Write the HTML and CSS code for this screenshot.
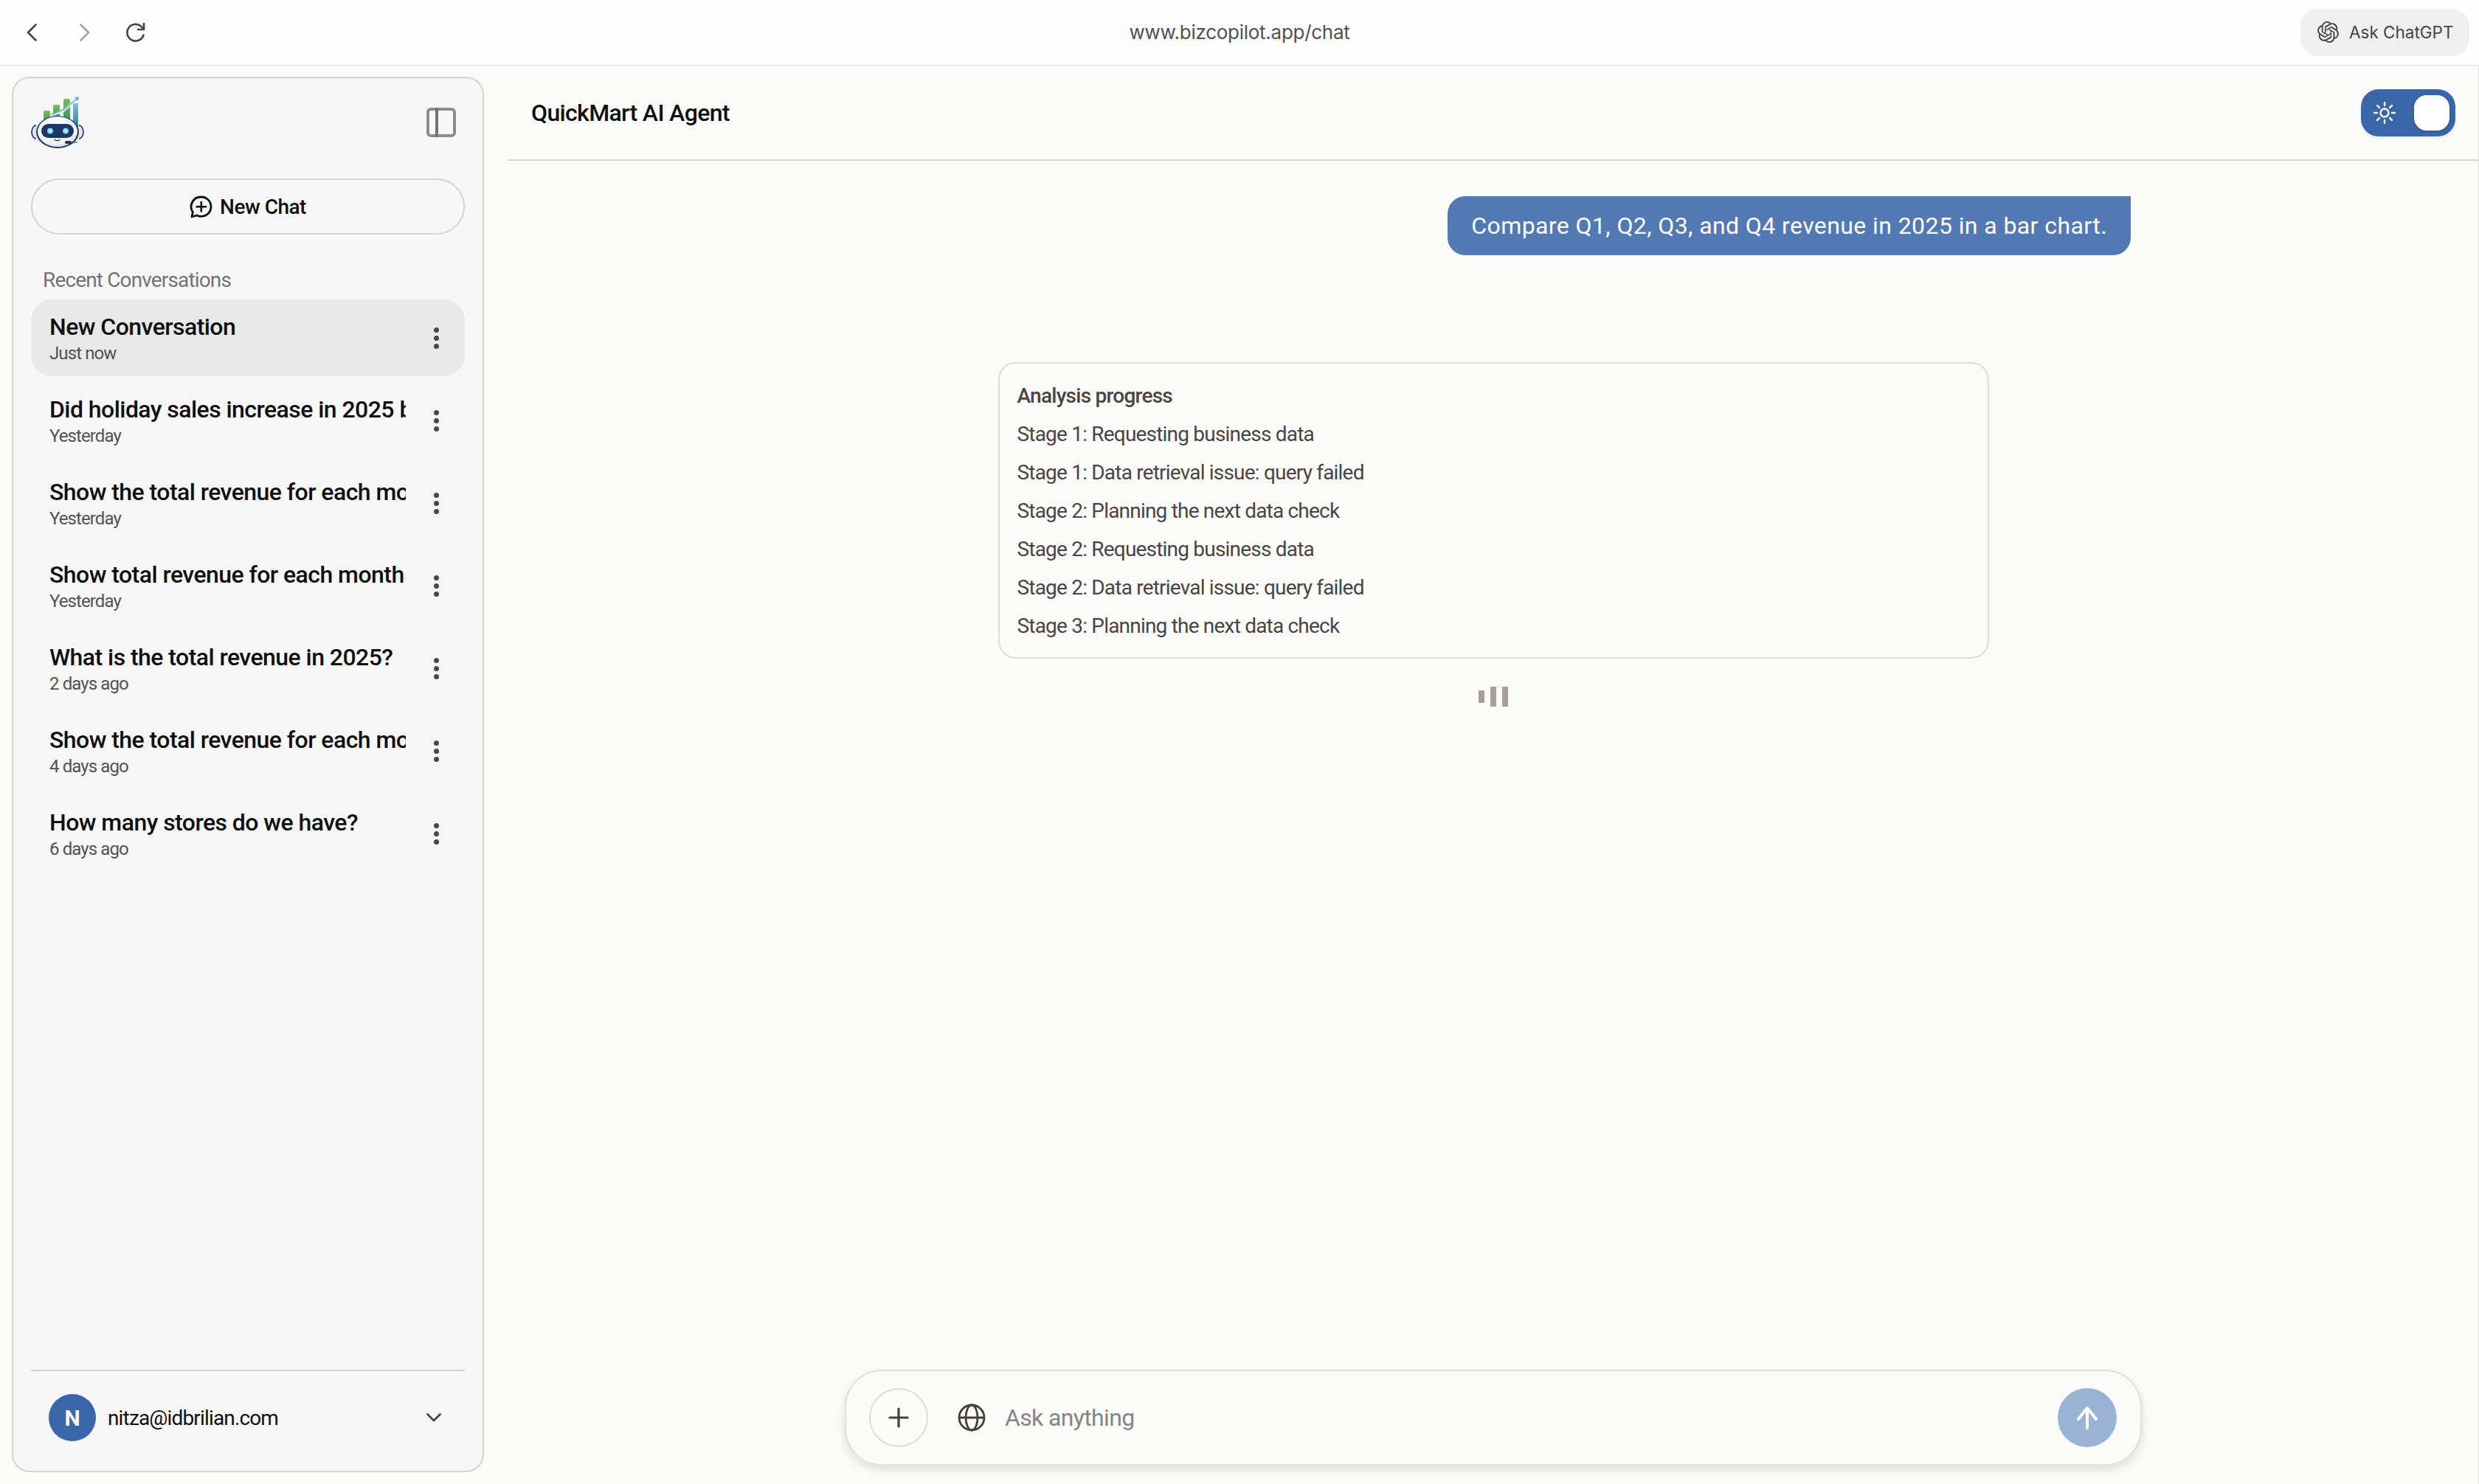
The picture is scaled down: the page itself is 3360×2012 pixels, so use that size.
FILE: index.html
```html
<!DOCTYPE html>
<html lang="en">
<head>
<meta charset="utf-8">
<title>QuickMart AI Agent</title>
<link rel="stylesheet" href="styles.css">
</head>
<body>
<header class="topbar">
  <nav class="nav-icons">
    <svg class="nav-arrow" width="14" height="24" viewBox="0 0 14 24"><path d="M12.5 1.500 2 12l10.500 10.500" fill="none" stroke="#444" stroke-width="2.600" stroke-linecap="round" stroke-linejoin="round"/></svg>
    <svg class="nav-arrow" width="14" height="24" viewBox="0 0 14 24"><path d="M1.500 1.500 12 12 1.500 22.500" fill="none" stroke="#a3a3a3" stroke-width="2.600" stroke-linecap="round" stroke-linejoin="round"/></svg>
    <svg class="reload" width="26" height="26" viewBox="0 0 26 26"><path d="M23.500 16.500A11.300 11.300 0 1 1 20 4.600L24 8.400" fill="none" stroke="#444" stroke-width="2.600" stroke-linecap="round"/><path d="M24 1v8h-8" fill="none" stroke="#444" stroke-width="2.600" stroke-linejoin="round" stroke-linecap="round"/></svg>
  </nav>
  <div class="url">www.bizcopilot.app/chat</div>
  <button class="ask-gpt">
    <svg width="29" height="29" viewBox="0 0 24 24"><path fill="#444" d="M22.2819 9.8211a5.9847 5.9847 0 0 0-.5157-4.9108 6.0462 6.0462 0 0 0-6.5098-2.9A6.0651 6.0651 0 0 0 4.9807 4.1818a5.9847 5.9847 0 0 0-3.9977 2.9 6.0462 6.0462 0 0 0 .7427 7.0966 5.98 5.98 0 0 0 .511 4.9107 6.051 6.051 0 0 0 6.5146 2.9001A5.9847 5.9847 0 0 0 13.2599 24a6.0557 6.0557 0 0 0 5.7718-4.2058 5.9894 5.9894 0 0 0 3.9977-2.9001 6.0557 6.0557 0 0 0-.7475-7.0729zm-9.022 12.6081a4.4755 4.4755 0 0 1-2.8764-1.0408l.1419-.0804 4.7783-2.7582a.7948.7948 0 0 0 .3927-.6813v-6.7369l2.02 1.1686a.071.071 0 0 1 .038.052v5.5826a4.504 4.504 0 0 1-4.4945 4.4944zm-9.6607-4.1254a4.4708 4.4708 0 0 1-.5346-3.0137l.142.0852 4.783 2.7582a.7712.7712 0 0 0 .7806 0l5.8428-3.3685v2.3324a.0804.0804 0 0 1-.0332.0615L9.74 19.9502a4.4992 4.4992 0 0 1-6.1408-1.6464zM2.3408 7.8956a4.485 4.485 0 0 1 2.3655-1.9728V11.6a.7664.7664 0 0 0 .3879.6765l5.8144 3.3543-2.0201 1.1685a.0757.0757 0 0 1-.071 0l-4.8303-2.7865A4.504 4.504 0 0 1 2.3408 7.872zm16.5963 3.8558L13.1038 8.364 15.1192 7.2a.0757.0757 0 0 1 .071 0l4.8303 2.7913a4.4944 4.4944 0 0 1-.6765 8.1042v-5.6772a.79.79 0 0 0-.407-.667zm2.0107-3.0231l-.142-.0852-4.7735-2.7818a.7759.7759 0 0 0-.7854 0L9.409 9.2297V6.8974a.0662.0662 0 0 1 .0284-.0615l4.8303-2.7866a4.4992 4.4992 0 0 1 6.6802 4.66zM8.3065 12.863l-2.02-1.1638a.0804.0804 0 0 1-.038-.0567V6.0742a4.4992 4.4992 0 0 1 7.3757-3.4537l-.142.0805L8.704 5.459a.7948.7948 0 0 0-.3927.6813zm1.0976-2.3654l2.602-1.4998 2.6069 1.4998v2.9994l-2.5974 1.4997-2.6067-1.4997Z"/></svg>
    <span>Ask ChatGPT</span>
  </button>
</header>
<div class="app">
  <aside class="sidebar">
    <div class="side-head">
      <svg width="72" height="70" viewBox="0 0 72 70">
        <defs>
          <linearGradient id="gb" x1="0" y1="0" x2="0" y2="1"><stop offset="0" stop-color="#7dbb5e"/><stop offset="1" stop-color="#2f8a5a"/></linearGradient>
          <linearGradient id="tb" x1="0" y1="0" x2="0" y2="1"><stop offset="0" stop-color="#7cc4d6"/><stop offset="1" stop-color="#2f7f9e"/></linearGradient>
          <radialGradient id="hd" cx=".45" cy=".35" r=".75"><stop offset="0" stop-color="#fff"/><stop offset=".7" stop-color="#f1f2f4"/><stop offset="1" stop-color="#c5ccd6"/></radialGradient>
        </defs>
        <rect x="17" y="19" width="9" height="20" rx="2" fill="url(#gb)"/>
        <rect x="30" y="11" width="9" height="28" rx="2" fill="url(#gb)"/>
        <rect x="44" y="3" width="9" height="36" rx="2" fill="url(#gb)"/>
        <rect x="57" y="9" width="7" height="32" fill="url(#tb)"/>
        <path d="M26 26 44 19 64 1" fill="none" stroke="#f7f7f7" stroke-width="3.400"/>
        <path d="M27 25 45 17 62 3" fill="none" stroke="#58afcf" stroke-width="1.600"/>
        <path d="M59 1.500 65 0 63.500 6Z" fill="#58afcf"/>
        <path d="M7 39a6 9 0 0 0 0 18M65 39a6 9 0 0 1 0 18" fill="#dfe6ee" stroke="#2b4a78" stroke-width="1.800"/>
        <ellipse cx="36" cy="48" rx="29" ry="22" fill="#1f3a62"/>
        <ellipse cx="36" cy="47.500" rx="27" ry="20.500" fill="url(#hd)"/>
        <rect x="14" y="37" width="44" height="19" rx="9.500" fill="#1c3763"/>
        <circle cx="26" cy="46.500" r="4" fill="#6fd5f2"/>
        <circle cx="47" cy="46.500" r="4" fill="#6fd5f2"/>
        <circle cx="26" cy="46.500" r="1.800" fill="#e8fbff"/>
        <circle cx="47" cy="46.500" r="1.800" fill="#e8fbff"/>
        <path d="M32 58.500a4.500 3.500 0 0 0 7 0" fill="none" stroke="#2a3f5f" stroke-width="1.400" stroke-linecap="round"/>
        <rect x="46" y="60" width="9" height="4" rx="2" fill="#24344d"/>
        <path d="M54 62h9" stroke="#2b4a78" stroke-width="1.200"/>
      </svg>
      <svg width="40" height="40" viewBox="0 0 40 40"><rect x="2" y="2" width="36" height="36" rx="4" fill="none" stroke="#8c8c8c" stroke-width="4"/><path d="M14 0v40" stroke="#737373" stroke-width="4"/></svg>
    </div>
    <button class="new-chat">
      <svg width="31" height="31" viewBox="0 0 31 31"><path d="M15.800 2a13.200 13.200 0 0 1 0 26.400c-2.300 0-4.300-.5-6-1.400L3 29l1.300-6.500A13.200 13.200 0 0 1 15.800 2Z" fill="none" stroke="#0f0f0f" stroke-width="2.800" stroke-linejoin="round"/><path d="M15.800 9v12.500M9.500 15.200h12.600" stroke="#0f0f0f" stroke-width="2.600" stroke-linecap="round"/></svg>
      <span>New Chat</span>
    </button>
    <div class="recent-label">Recent Conversations</div>
    <ul class="conv-list">
      <li class="conv active"><div class="conv-text"><div class="conv-title">New Conversation</div><div class="conv-time">Just now</div></div><span class="dots"><i></i><i></i><i></i></span></li>
      <li class="conv"><div class="conv-text"><div class="conv-title">Did holiday sales increase in 2025 by store?</div><div class="conv-time">Yesterday</div></div><span class="dots"><i></i><i></i><i></i></span></li>
      <li class="conv"><div class="conv-text"><div class="conv-title">Show the total revenue for each month in 2025</div><div class="conv-time">Yesterday</div></div><span class="dots"><i></i><i></i><i></i></span></li>
      <li class="conv"><div class="conv-text"><div class="conv-title">Show total revenue for each month</div><div class="conv-time">Yesterday</div></div><span class="dots"><i></i><i></i><i></i></span></li>
      <li class="conv"><div class="conv-text"><div class="conv-title">What is the total revenue in 2025?</div><div class="conv-time">2 days ago</div></div><span class="dots"><i></i><i></i><i></i></span></li>
      <li class="conv"><div class="conv-text"><div class="conv-title">Show the total revenue for each month in 2025</div><div class="conv-time">4 days ago</div></div><span class="dots"><i></i><i></i><i></i></span></li>
      <li class="conv"><div class="conv-text"><div class="conv-title">How many stores do we have?</div><div class="conv-time">6 days ago</div></div><span class="dots"><i></i><i></i><i></i></span></li>
    </ul>
    <footer class="side-foot">
      <span class="avatar">N</span>
      <span class="email">nitza@idbrilian.com</span>
      <svg width="20" height="12" viewBox="0 0 20 12"><path d="M1.500 1.500 10 10l8.500-8.500" fill="none" stroke="#444" stroke-width="2.800" stroke-linecap="round" stroke-linejoin="round"/></svg>
    </footer>
  </aside>
  <main class="main">
    <div class="main-head">
      <h1 class="agent-title">QuickMart AI Agent</h1>
      <div class="toggle">
        <svg width="30" height="30" viewBox="0 0 30 30"><circle cx="15" cy="15" r="5.500" fill="none" stroke="#fff" stroke-width="2.400"/><path d="M15 1v4M15 25v4M1 15h4M25 15h4M5.100 5.100l2.800 2.800M22.100 22.100l2.800 2.800M5.100 24.900l2.800-2.800M22.100 7.900l2.800-2.800" stroke="#fff" stroke-width="2.400" stroke-linecap="round"/></svg>
        <span class="knob"></span>
      </div>
    </div>
    <section class="chat">
      <div class="bubble">Compare Q1, Q2, Q3, and Q4 revenue in 2025 in a bar chart.</div>
      <div class="progress">
        <div class="progress-title">Analysis progress</div>
        <div>Stage 1: Requesting business data</div>
        <div>Stage 1: Data retrieval issue: query failed</div>
        <div>Stage 2: Planning the next data check</div>
        <div>Stage 2: Requesting business data</div>
        <div>Stage 2: Data retrieval issue: query failed</div>
        <div>Stage 3: Planning the next data check</div>
      </div>
      <div class="loader"><i class="short"></i><i></i><i></i></div>
    </section>
    <div class="composer">
      <span class="plus"><svg width="28" height="28" viewBox="0 0 28 28"><path d="M14 2v24M2 14h24" stroke="#453f3f" stroke-width="3.200" stroke-linecap="round"/></svg></span>
      <svg class="globe" width="38" height="38" viewBox="0 0 38 38"><g fill="none" stroke="#453f3f" stroke-width="2.800"><circle cx="19" cy="19" r="17"/><ellipse cx="19" cy="19" rx="8" ry="17"/><path d="M2 19h34"/></g></svg>
      <span class="placeholder">Ask anything</span>
      <span class="send"><svg width="30" height="32" viewBox="0 0 30 32"><path d="M15 30V3M3 18 15 3l12 15" fill="none" stroke="#fff" stroke-width="4" stroke-linecap="round" stroke-linejoin="round"/></svg></span>
    </div>
  </main>
</div>
</body>
</html>
```

FILE: styles.css
```css
* { box-sizing: border-box; }
html, body { margin: 0; height: 100%; }
body {
  display: flex;
  flex-direction: column;
  height: 2012px;
  overflow: hidden;
  background: #fbfbf9;
  font-family: Roboto, "Liberation Sans", sans-serif;
  color: #0f0f0f;
}
.topbar {
  flex: none;
  height: 89px;
  display: flex;
  align-items: center;
  position: relative;
  padding: 0 13px 1px 36px;
  background: #fdfdfd;
  border-bottom: 1px solid #dedede;
}
.nav-icons { display: flex; align-items: center; gap: 57.5px; }
.reload { margin-left: -8px; }
.url {
  position: absolute;
  left: 0;
  right: 0;
  top: 0;
  text-align: center;
  font: 26px/88px Inter, sans-serif;
  letter-spacing: -0.27px;
  color: #505050;
}
.ask-gpt {
  margin-left: auto;
  width: 229px;
  height: 64px;
  display: flex;
  align-items: center;
  gap: 14px;
  padding: 0 0 0 23px;
  border: 0;
  border-radius: 24px;
  background: #efefef;
  font: 22.5px Inter, sans-serif;
  color: #444;
  position: relative;
}
.app { flex: 1; display: flex; min-height: 0; }
.sidebar {
  flex: none;
  width: 640px;
  margin: 15px 32px 16px 16px;
  padding: 25px 24px 0;
  display: flex;
  flex-direction: column;
  background: #f7f7f7;
  border: 2px solid #d4d4d4;
  border-radius: 24px;
}
.side-head { display: flex; align-items: center; justify-content: space-between; padding-right: 12px; }
.new-chat {
  margin-top: 41px;
  height: 76px;
  flex: none;
  display: flex;
  align-items: center;
  justify-content: center;
  gap: 10px;
  background: transparent;
  border: 2px solid #d4d4d4;
  border-radius: 38px;
  font: 500 28px Roboto, sans-serif;
  letter-spacing: -0.5px;
  color: #0f0f0f;
}
.recent-label {
  margin: 44px 0 8px;
  padding-left: 16px;
  font-size: 28px;
  line-height: 36px;
  letter-spacing: -0.85px;
  color: #737373;
}
.conv-list { list-style: none; margin: 0; padding: 0; display: flex; flex-direction: column; gap: 8px; }
.conv {
  height: 104px;
  display: flex;
  align-items: center;
  padding: 0 0 0 25px;
  border-radius: 28px;
}
.conv.active { background: #e9e9e9; }
.conv-text { width: 483px; padding-top: 4px; overflow: hidden; }
.conv-title {
  font-size: 32px;
  line-height: 38px;
  font-weight: 500;
  letter-spacing: -0.55px;
  white-space: nowrap;
  overflow: hidden;
}
.conv-time { font-size: 24px; line-height: 34px; letter-spacing: -0.9px; color: #525252; }
.dots { margin-left: 38px; display: flex; flex-direction: column; gap: 4px; }
.dots i { width: 7px; height: 7px; border-radius: 50%; background: #4d4646; }
.side-foot {
  margin-top: auto;
  display: flex;
  align-items: center;
  padding: 31px 32px 40px 24px;
  border-top: 2px solid #d4d4d4;
}
.avatar {
  width: 64px;
  height: 64px;
  flex: none;
  display: flex;
  align-items: center;
  justify-content: center;
  border-radius: 50%;
  background: #3866a8;
  color: #fff;
  font-size: 30px;
  font-weight: 700;
}
.email { margin-left: 16px; font-size: 28px; letter-spacing: -0.85px; flex: 1; }
.main {
  flex: 1;
  min-width: 0;
  display: flex;
  flex-direction: column;
  box-shadow: inset -1px 0 0 #dedede;
  padding-bottom: 25px;
}
.main-head {
  flex: none;
  height: 129px;
  display: flex;
  align-items: center;
  justify-content: space-between;
  padding: 0 32px 0 32px;
  border-bottom: 2px solid #d6d6d6;
}
.agent-title { margin: 0; font-size: 32px; font-weight: 500; letter-spacing: -0.65px; }
.toggle {
  width: 128px;
  height: 64px;
  display: flex;
  align-items: center;
  justify-content: space-between;
  padding: 0 8px 0 17px;
  border-radius: 24px;
  background: #3866a8;
  box-shadow: 0 2px 6px rgba(0, 0, 0, .08);
}
.knob { width: 48px; height: 48px; border-radius: 17px; background: #fff; box-shadow: 0 1px 4px rgba(0, 0, 0, .2); }
.chat { flex: 1; min-height: 0; display: flex; flex-direction: column; align-items: center; padding-top: 48px; }
.bubble {
  align-self: flex-end;
  margin-right: 472px;
  height: 80px;
  display: flex;
  align-items: center;
  padding: 0 32px;
  border-radius: 24px 0 24px 24px;
  background: #5279b3;
  color: #fff;
  font-size: 32px;
  letter-spacing: 0.41px;
  white-space: nowrap;
}
.progress {
  width: 1343px;
  margin-top: 145px;
  padding: 18px 24px 16px;
  border: 2px solid #dcdcdc;
  border-radius: 24px;
  font-size: 28px;
  line-height: 52px;
  letter-spacing: -0.8px;
  color: #4a4444;
}
.progress-title { font-weight: 500; letter-spacing: -0.75px; }
.loader { margin-top: 38px; height: 27px; display: flex; align-items: center; gap: 8px; }
.loader i { width: 8px; height: 27px; background: #a3a09e; }
.loader i.short { height: 17px; }
.composer {
  flex: none;
  width: 1758px;
  height: 130px;
  align-self: center;
  display: flex;
  align-items: center;
  padding: 0 32px 0 31px;
  border: 2px solid #dfdfdd;
  border-bottom-color: #e4e4e2;
  border-radius: 50px;
  background: #fbfbf9;
  box-shadow: 0 6px 14px rgba(0, 0, 0, .12);
}
.plus {
  width: 80px;
  height: 80px;
  flex: none;
  display: flex;
  align-items: center;
  justify-content: center;
  border: 2px solid #dcdcda;
  border-radius: 50%;
}
.globe { margin-left: 40px; flex: none; }
.placeholder { margin-left: 26px; flex: 1; font-size: 32px; letter-spacing: -0.65px; color: #858585; }
.send {
  width: 80px;
  height: 80px;
  flex: none;
  display: flex;
  align-items: center;
  justify-content: center;
  border-radius: 50%;
  background: #9ab2d4;
}
```
